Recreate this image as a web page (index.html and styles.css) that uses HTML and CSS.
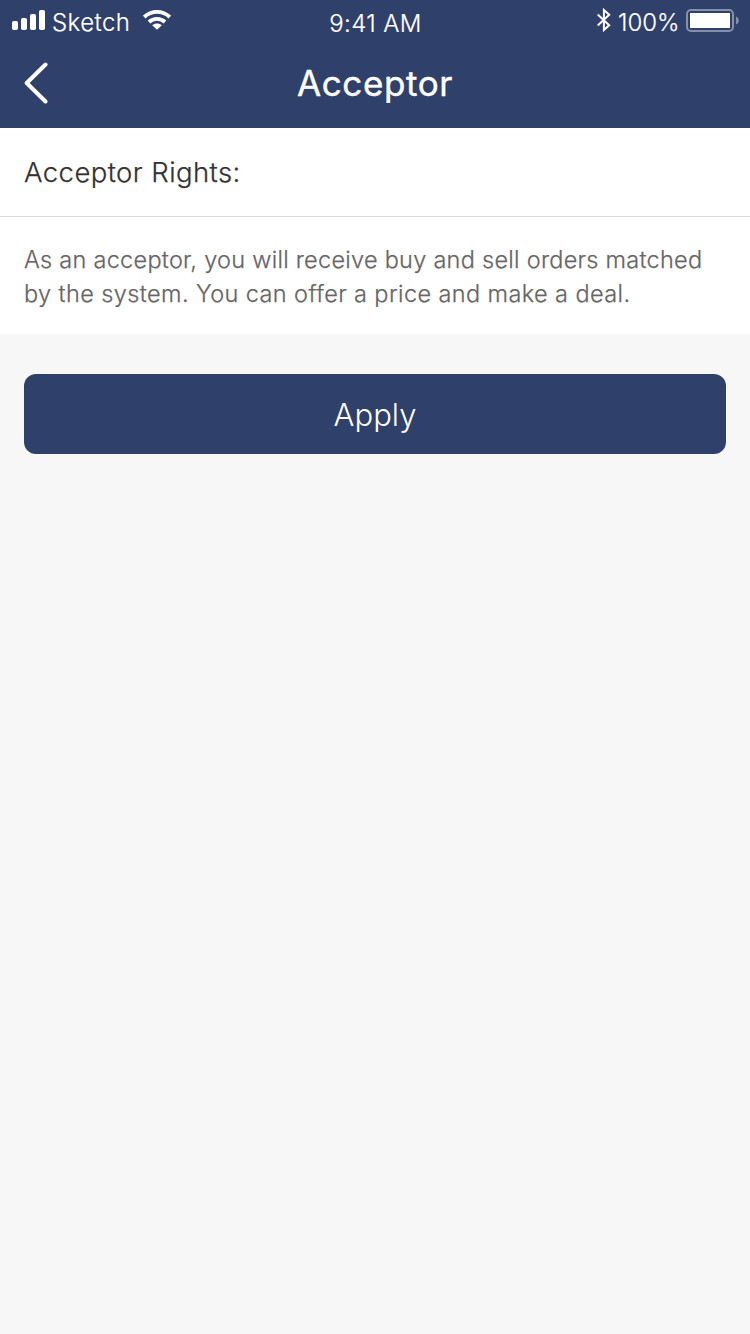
FILE: index.html
```html
<!DOCTYPE html>
<html lang="en">
<head>
<meta charset="utf-8">
<title>Acceptor</title>
<link rel="stylesheet" href="styles.css">
</head>
<body>
<header class="header">
  <div class="status">
    <div class="status-left">
      <svg class="signal" width="33" height="20" viewBox="0 0 33 20" fill="#fff"><rect y="11" width="6" height="9" rx="1.8"/><rect x="9" y="8" width="6" height="12" rx="1.8"/><rect x="18" y="4" width="6" height="16" rx="1.8"/><rect x="27" width="6" height="20" rx="1.8"/></svg>
      <span class="carrier">Sketch</span>
      <svg class="wifi" width="28" height="20" viewBox="0 0 28 20" fill="none" stroke="#fff" stroke-width="3.8"><path d="M1.2 7.1C8.4 0.2 19.6 0.2 26.8 7.1"/><path d="M6 12C10.5 7.8 17.5 7.8 22 12"/><path d="M14 19.8L9.2 15.2C12 12.8 16 12.8 18.8 15.2Z" fill="#fff" stroke="none"/></svg>
    </div>
    <span class="time">9:41 AM</span>
    <div class="status-right">
      <svg class="bluetooth" width="14" height="24" viewBox="0 0 14 24" fill="none" stroke="#fff" stroke-width="2"><path d="M.7 6.6L12.2 17.2L6.9 22V2L12.2 6.8L.7 17.4"/></svg>
      <span class="percent">100%</span>
      <svg class="battery" width="53" height="23" viewBox="0 0 53 23"><rect x="1" y="1" width="46" height="21" rx="4" fill="none" stroke="#fff" stroke-opacity=".42" stroke-width="2"/><rect x="4" y="4" width="40" height="15" fill="#fff"/><path d="M50 7.5C53.7 8.7 53.7 14.3 50 15.5Z" fill="#fff" fill-opacity=".42"/></svg>
    </div>
  </div>
  <nav class="nav">
    <a class="back" href="#" aria-label="Back"><svg width="24" height="42" viewBox="0 0 24 42" fill="none" stroke="#fff" stroke-width="4" stroke-linecap="round" stroke-linejoin="round"><path d="M21.5 2.5L2.7 21L21.5 39.5"/></svg></a>
    <h1 class="title">Acceptor</h1>
  </nav>
</header>
<main>
  <section class="rights">
    <h2 class="rights-title">Acceptor Rights:</h2>
    <p class="rights-text"><span class="line line-one">As an acceptor, you will receive buy and sell orders matched</span> <span class="line line-two">by the system. You can offer a price and make a deal.</span></p>
  </section>
  <button class="apply" type="button">Apply</button>
</main>
</body>
</html>
```

FILE: styles.css
```css
* { box-sizing: border-box; }
body { margin: 0; min-height: 1334px; background: #f7f7f7; font-family: Inter, "Liberation Sans", sans-serif; }
h1, h2, p { margin: 0; }
svg { display: block; flex: none; }
.header { height: 128px; background: #2f406b; color: #fff; }
.status { display: grid; grid-template-columns: 1fr auto 1fr; height: 40px; padding: 0 11px 0 12px; font-size: 24px; line-height: 28px; font-weight: 300; -webkit-text-stroke: .2px; white-space: nowrap; }
.status-left, .status-right { display: flex; align-items: flex-start; }
.status-right { justify-content: flex-end; }
.signal { margin-top: 10px; }
.carrier { width: 91px; margin: 9px 0 0 7px; letter-spacing: .45px; }
.wifi { margin-top: 10px; }
.time { margin-top: 10px; letter-spacing: .4px; }
.bluetooth { margin-top: 8px; }
.percent { width: 62px; margin: 9px 6px 0 7px; }
.battery { margin-top: 9px; }
.nav { display: grid; grid-template-columns: 1fr auto 1fr; height: 88px; padding: 0 24px; }
.back { padding-top: 22px; }
.title { padding-top: 21px; font-size: 35px; line-height: 44px; font-weight: 400; letter-spacing: .6px; -webkit-text-stroke: .4px; }
.rights { height: 206px; background: #fff; }
.rights-title { height: 89px; padding: 24px 24px 0; border-bottom: 1px solid #d9d9d9; color: #333; font-size: 27.5px; line-height: 40px; font-weight: 300; letter-spacing: .42px; -webkit-text-stroke: .25px; }
.rights-text { padding: 26px 24px 0; color: #666; font-size: 23.5px; line-height: 34px; font-weight: 300; -webkit-text-stroke: .25px; }
.line { display: block; white-space: nowrap; }
.line-one { letter-spacing: .27px; }
.line-two { letter-spacing: .4px; }
.apply { display: block; width: 702px; height: 80px; margin: 40px 24px 0; padding: 2px 0 0; border: 0; border-radius: 12px; background: #2f406b; color: #fff; font: 300 31px/44px Inter, "Liberation Sans", sans-serif; }
```
